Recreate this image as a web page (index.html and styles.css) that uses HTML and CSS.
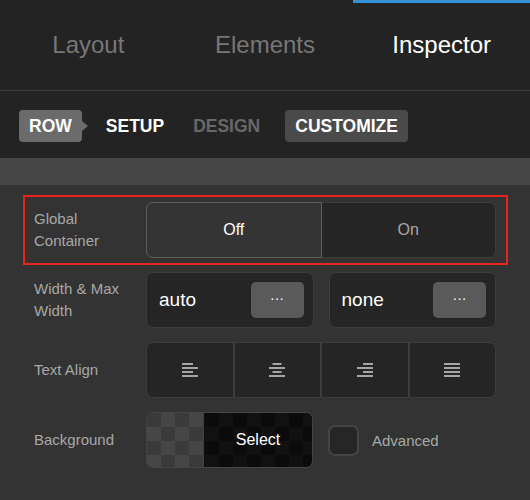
FILE: index.html
```html
<!DOCTYPE html>
<html lang="en">
<head>
    <meta charset="UTF-8">
    <meta name="viewport" content="width=device-width, initial-scale=1.0">
    <title>Inspector</title>
    <link rel="stylesheet" href="styles.css">
</head>
<body>
    <div class="tabs">
        <div class="tab">Layout</div>
        <div class="tab">Elements</div>
        <div class="tab active">Inspector</div>
    </div>

    <div class="subnav">
        <span class="crumb row">ROW</span>
        <span class="crumb">SETUP</span>
        <span class="crumb muted">DESIGN</span>
        <span class="crumb pill">CUSTOMIZE</span>
    </div>

    <div class="band"></div>

    <div class="panel">
        <div class="field highlight">
            <div class="label">Global<br>Container</div>
            <div class="toggle">
                <div class="toggle-opt selected">Off</div>
                <div class="toggle-opt">On</div>
            </div>
        </div>

        <div class="field">
            <div class="label">Width &amp; Max<br>Width</div>
            <div class="pair">
                <div class="value-box">
                    <span>auto</span>
                    <div class="more">&middot;&middot;&middot;</div>
                </div>
                <div class="value-box">
                    <span>none</span>
                    <div class="more">&middot;&middot;&middot;</div>
                </div>
            </div>
        </div>

        <div class="field">
            <div class="label">Text Align</div>
            <div class="align-group">
                <div class="align-btn">
                    <svg width="16" height="14" viewBox="0 0 16 14"><rect x="0" y="0" width="11" height="2"/><rect x="0" y="4" width="16" height="2"/><rect x="0" y="8" width="11" height="2"/><rect x="0" y="12" width="16" height="2"/></svg>
                </div>
                <div class="align-btn">
                    <svg width="16" height="14" viewBox="0 0 16 14"><rect x="3.5" y="0" width="9" height="2"/><rect x="0" y="4" width="16" height="2"/><rect x="3.5" y="8" width="9" height="2"/><rect x="0" y="12" width="16" height="2"/></svg>
                </div>
                <div class="align-btn">
                    <svg width="16" height="14" viewBox="0 0 16 14"><rect x="6" y="0" width="10" height="2"/><rect x="0" y="4" width="16" height="2"/><rect x="6" y="8" width="10" height="2"/><rect x="0" y="12" width="16" height="2"/></svg>
                </div>
                <div class="align-btn">
                    <svg width="16" height="14" viewBox="0 0 16 14"><rect x="0" y="0" width="16" height="2"/><rect x="0" y="4" width="16" height="2"/><rect x="0" y="8" width="16" height="2"/><rect x="0" y="12" width="16" height="2"/></svg>
                </div>
            </div>
        </div>

        <div class="field">
            <div class="label">Background</div>
            <div class="bg-controls">
                <div class="swatch">
                    <div class="checker"></div>
                    <div class="swatch-select">Select</div>
                </div>
                <div class="checkbox"></div>
                <span class="check-label">Advanced</span>
            </div>
        </div>
    </div>
</body>
</html>
```

FILE: styles.css
```css
body {
    margin: 0;
    width: 530px;
    min-height: 500px;
    background: #333333;
    font-family: "Liberation Sans", Arial, sans-serif;
    color: #eeeeee;
}

/* top tabs */
.tabs {
    display: flex;
    height: 90px;
    background: #232323;
    border-bottom: 1px solid #3a3a3a;
}
.tab {
    flex: 1;
    text-align: center;
    border-top: 3px solid transparent;
    padding-top: 28px;
    font-size: 24px;
    line-height: 28px;
    color: #777777;
}
.tab.active {
    border-top-color: #3392d4;
    color: #ffffff;
}

/* breadcrumb row */
.subnav {
    display: flex;
    align-items: center;
    height: 67px;
    box-sizing: border-box;
    padding: 3px 0 0 19px;
    background: #232323;
}
.crumb {
    padding: 0 10px;
    height: 32px;
    line-height: 33px;
    font-size: 17.5px;
    font-weight: bold;
    color: #ffffff;
    border-radius: 4px;
    margin-right: 5px;
}
.crumb.row {
    position: relative;
    background: #6b6b6b;
    margin-right: 14px;
}
.crumb.row::after {
    content: "";
    position: absolute;
    right: -6px;
    top: 11px;
    border-top: 5px solid transparent;
    border-bottom: 5px solid transparent;
    border-left: 6px solid #6b6b6b;
}
.crumb.muted {
    color: #686868;
    margin-left: 4px;
}
.crumb.pill {
    background: #4a4a4a;
    margin-left: 10px;
}

.band {
    height: 27px;
    background: #464646;
}

/* settings panel */
.panel {
    padding-top: 10px;
}
.field {
    display: flex;
    align-items: center;
    margin: 0 22px 0 23px;
    padding: 5px 10px 5px 9px;
    border: 2px solid transparent;
}
.field.highlight {
    border-color: #e8231c;
}
.label {
    width: 112px;
    flex-shrink: 0;
    font-size: 15px;
    line-height: 22px;
    color: #a8a8a8;
}

.toggle {
    flex: 1;
    display: flex;
    height: 56px;
    box-sizing: border-box;
    border: 1px solid #3d3d3d;
    border-radius: 7px;
    background: #252525;
}
.toggle-opt {
    flex: 1;
    display: flex;
    align-items: center;
    justify-content: center;
    font-size: 16px;
    color: #a8a8a8;
}
.toggle-opt.selected {
    margin: -1px 0 -1px -1px;
    background: #343434;
    border: 1px solid #5e5e5e;
    border-radius: 7px 0 0 7px;
    color: #ffffff;
}

.pair {
    flex: 1;
    display: flex;
    gap: 15px;
}
.value-box {
    flex: 1;
    display: flex;
    align-items: center;
    justify-content: space-between;
    height: 56px;
    box-sizing: border-box;
    padding: 0 9px 0 12px;
    background: #252525;
    border: 1px solid #3d3d3d;
    border-radius: 7px;
    font-size: 19px;
    color: #ffffff;
}
.more {
    width: 53px;
    height: 36px;
    line-height: 32px;
    text-align: center;
    background: #5a5a5a;
    border-radius: 5px;
    font-size: 14px;
    color: #ffffff;
}

.align-group {
    flex: 1;
    display: flex;
    height: 56px;
    box-sizing: border-box;
    background: #252525;
    border: 1px solid #3d3d3d;
    border-radius: 7px;
}
.align-btn {
    flex: 1;
    display: flex;
    align-items: center;
    justify-content: center;
    border-left: 2px solid #3d3d3d;
}
.align-btn:first-child {
    border-left: none;
}
.align-btn svg {
    fill: #a5a5a5;
}

.bg-controls {
    flex: 1;
    display: flex;
    align-items: center;
}
.swatch {
    display: flex;
    width: 167px;
    height: 56px;
    box-sizing: border-box;
    border: 1px solid #444444;
    border-radius: 7px;
    overflow: hidden;
}
.checker {
    width: 57px;
    background-color: #3a3a3a;
    background-image:
        linear-gradient(45deg, #464646 25%, transparent 25%, transparent 75%, #464646 75%),
        linear-gradient(45deg, #464646 25%, transparent 25%, transparent 75%, #464646 75%);
    background-size: 28px 28px;
    background-position: 0 0, 14px 14px;
}
.swatch-select {
    flex: 1;
    display: flex;
    align-items: center;
    justify-content: center;
    background-color: #0b0b0b;
    background-image:
        linear-gradient(45deg, #111111 25%, transparent 25%, transparent 75%, #111111 75%),
        linear-gradient(45deg, #111111 25%, transparent 25%, transparent 75%, #111111 75%);
    background-size: 28px 28px;
    background-position: 1px 0, 15px 14px;
    font-size: 16px;
    color: #ffffff;
}
.checkbox {
    width: 31px;
    height: 31px;
    box-sizing: border-box;
    margin-left: 15px;
    background: #262626;
    border: 2px solid #444444;
    border-radius: 7px;
}
.check-label {
    margin-left: 13px;
    font-size: 15px;
    color: #a8a8a8;
}
```
